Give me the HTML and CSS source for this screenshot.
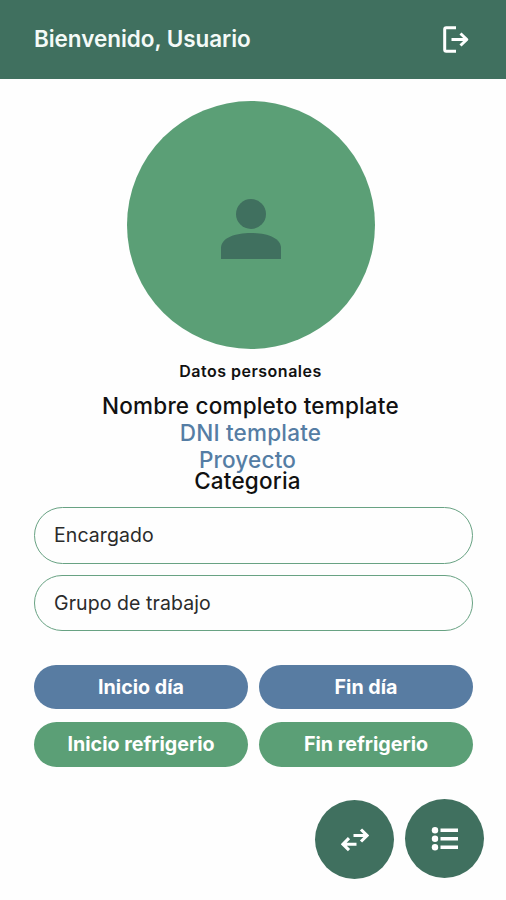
FILE: index.html
```html
<!DOCTYPE html>
<html lang="es">
<head>
<meta charset="utf-8">
<title>Bienvenido</title>
<link rel="stylesheet" href="styles.css">
</head>
<body>
<header class="topbar">
  <h1 class="greeting">Bienvenido, Usuario</h1>
  <button class="logout" aria-label="Salir">
    <svg width="28" height="30" viewBox="0 0 28 30" fill="none" stroke="currentColor" stroke-width="3" stroke-linejoin="round">
      <path d="M14 2.7H4.2Q2.7 2.7 2.7 4.2V24.8Q2.7 26.3 4.2 26.3H14"/>
      <path d="M9.5 14.5H25M18.5 8.5L24.8 14.5L18.5 20.5"/>
    </svg>
  </button>
</header>
<main class="content">
  <div class="avatar">
    <svg width="60" height="60" viewBox="0 0 60 60" fill="currentColor">
      <circle cx="30" cy="15" r="15"/>
      <path d="M0 60V49C0 39 14 34 30 34S60 39 60 49V60Z"/>
    </svg>
  </div>
  <section class="profile">
    <p class="caption">Datos personales</p>
    <p class="line name">Nombre completo template</p>
    <p class="line dni">DNI template</p>
    <p class="line project">Proyecto</p>
    <p class="line category">Categoria</p>
  </section>
  <div class="fields">
    <div class="field">Encargado</div>
    <div class="field">Grupo de trabajo</div>
  </div>
  <div class="actions">
    <button class="action day">Inicio día</button>
    <button class="action day">Fin día</button>
    <button class="action break">Inicio refrigerio</button>
    <button class="action break">Fin refrigerio</button>
  </div>
</main>
<nav class="fabs">
  <button class="fab swap" aria-label="Cambiar">
    <svg width="28" height="24" viewBox="0 0 28 24" fill="none" stroke="currentColor" stroke-width="3.1">
      <path d="M12.5 7.5H26M20 1.5L26 7.5L20 13.5"/>
      <path d="M15.5 16.2H2M8 10.2L2 16.2L8 22.2"/>
    </svg>
  </button>
  <button class="fab" aria-label="Lista">
    <svg width="28" height="26" viewBox="0 0 28 26" fill="currentColor">
      <circle cx="4" cy="4.3" r="3.2"/><circle cx="4" cy="12.8" r="3.2"/><circle cx="4" cy="21.3" r="3.2"/>
      <path d="M9.5 2.6H27V6H9.5ZM9.5 11.1H27V14.5H9.5ZM9.5 19.6H27V23H9.5Z"/>
    </svg>
  </button>
</nav>
</body>
</html>
```
FILE: styles.css
```css
* { box-sizing: border-box; margin: 0; padding: 0; }
body {
  width: 506px;
  height: 900px;
  overflow: hidden;
  background: #fefefe;
  color: #111;
  font-family: Inter, "Liberation Sans", sans-serif;
}
button { border: 0; background: none; font: inherit; color: #fff; }
svg { display: block; }
.topbar {
  height: 79px;
  display: flex;
  align-items: center;
  justify-content: space-between;
  padding: 0 36px 0 34px;
  background: #40705f;
  color: #f4faf7;
}
.greeting { font-size: 22.5px; font-weight: 600; line-height: 28px; letter-spacing: -0.05px; margin-top: -1px; }
.content { padding: 22px 33px 0 34px; }
.avatar {
  width: 248px;
  height: 248px;
  margin: 0 auto 0 93px;
  display: flex;
  align-items: center;
  justify-content: center;
  padding-top: 8px;
  border-radius: 50%;
  background: #5b9f76;
  color: #40705f;
}
.profile { text-align: center; padding-right: 6px; }
.caption { margin-top: 11px; font-size: 16px; font-weight: 600; line-height: 22px; letter-spacing: 0.5px; }
.line { font-size: 22.5px; font-weight: 500; line-height: 27px; letter-spacing: 0.2px; }
.name { margin-top: 10px; }
.dni, .project { color: #557da4; }
.project, .category { padding-right: 6px; }
.category { margin-top: -6px; }
.fields { display: grid; gap: 11px; margin-top: 13px; }
.field {
  height: 56.5px;
  display: flex;
  align-items: center;
  padding-left: 19px;
  border: 1.5px solid #68a283;
  border-radius: 29px;
  font-size: 19.5px;
  letter-spacing: 0.08px;
  color: #2b2b2b;
}
.actions { display: grid; grid-template-columns: 1fr 1fr; gap: 13px 11px; margin-top: 33.5px; }
.action { height: 44.5px; border-radius: 23px; font-size: 19.7px; font-weight: 700; }
.day { background: #587ca2; }
.break { background: #5b9f76; }
.fabs { display: flex; justify-content: flex-end; gap: 11px; padding: 32.5px 22px 0 0; }
.fab {
  width: 79px;
  height: 79px;
  display: flex;
  align-items: center;
  justify-content: center;
  border-radius: 50%;
  background: #40705f;
}
.swap { margin-top: 1px; }
```
